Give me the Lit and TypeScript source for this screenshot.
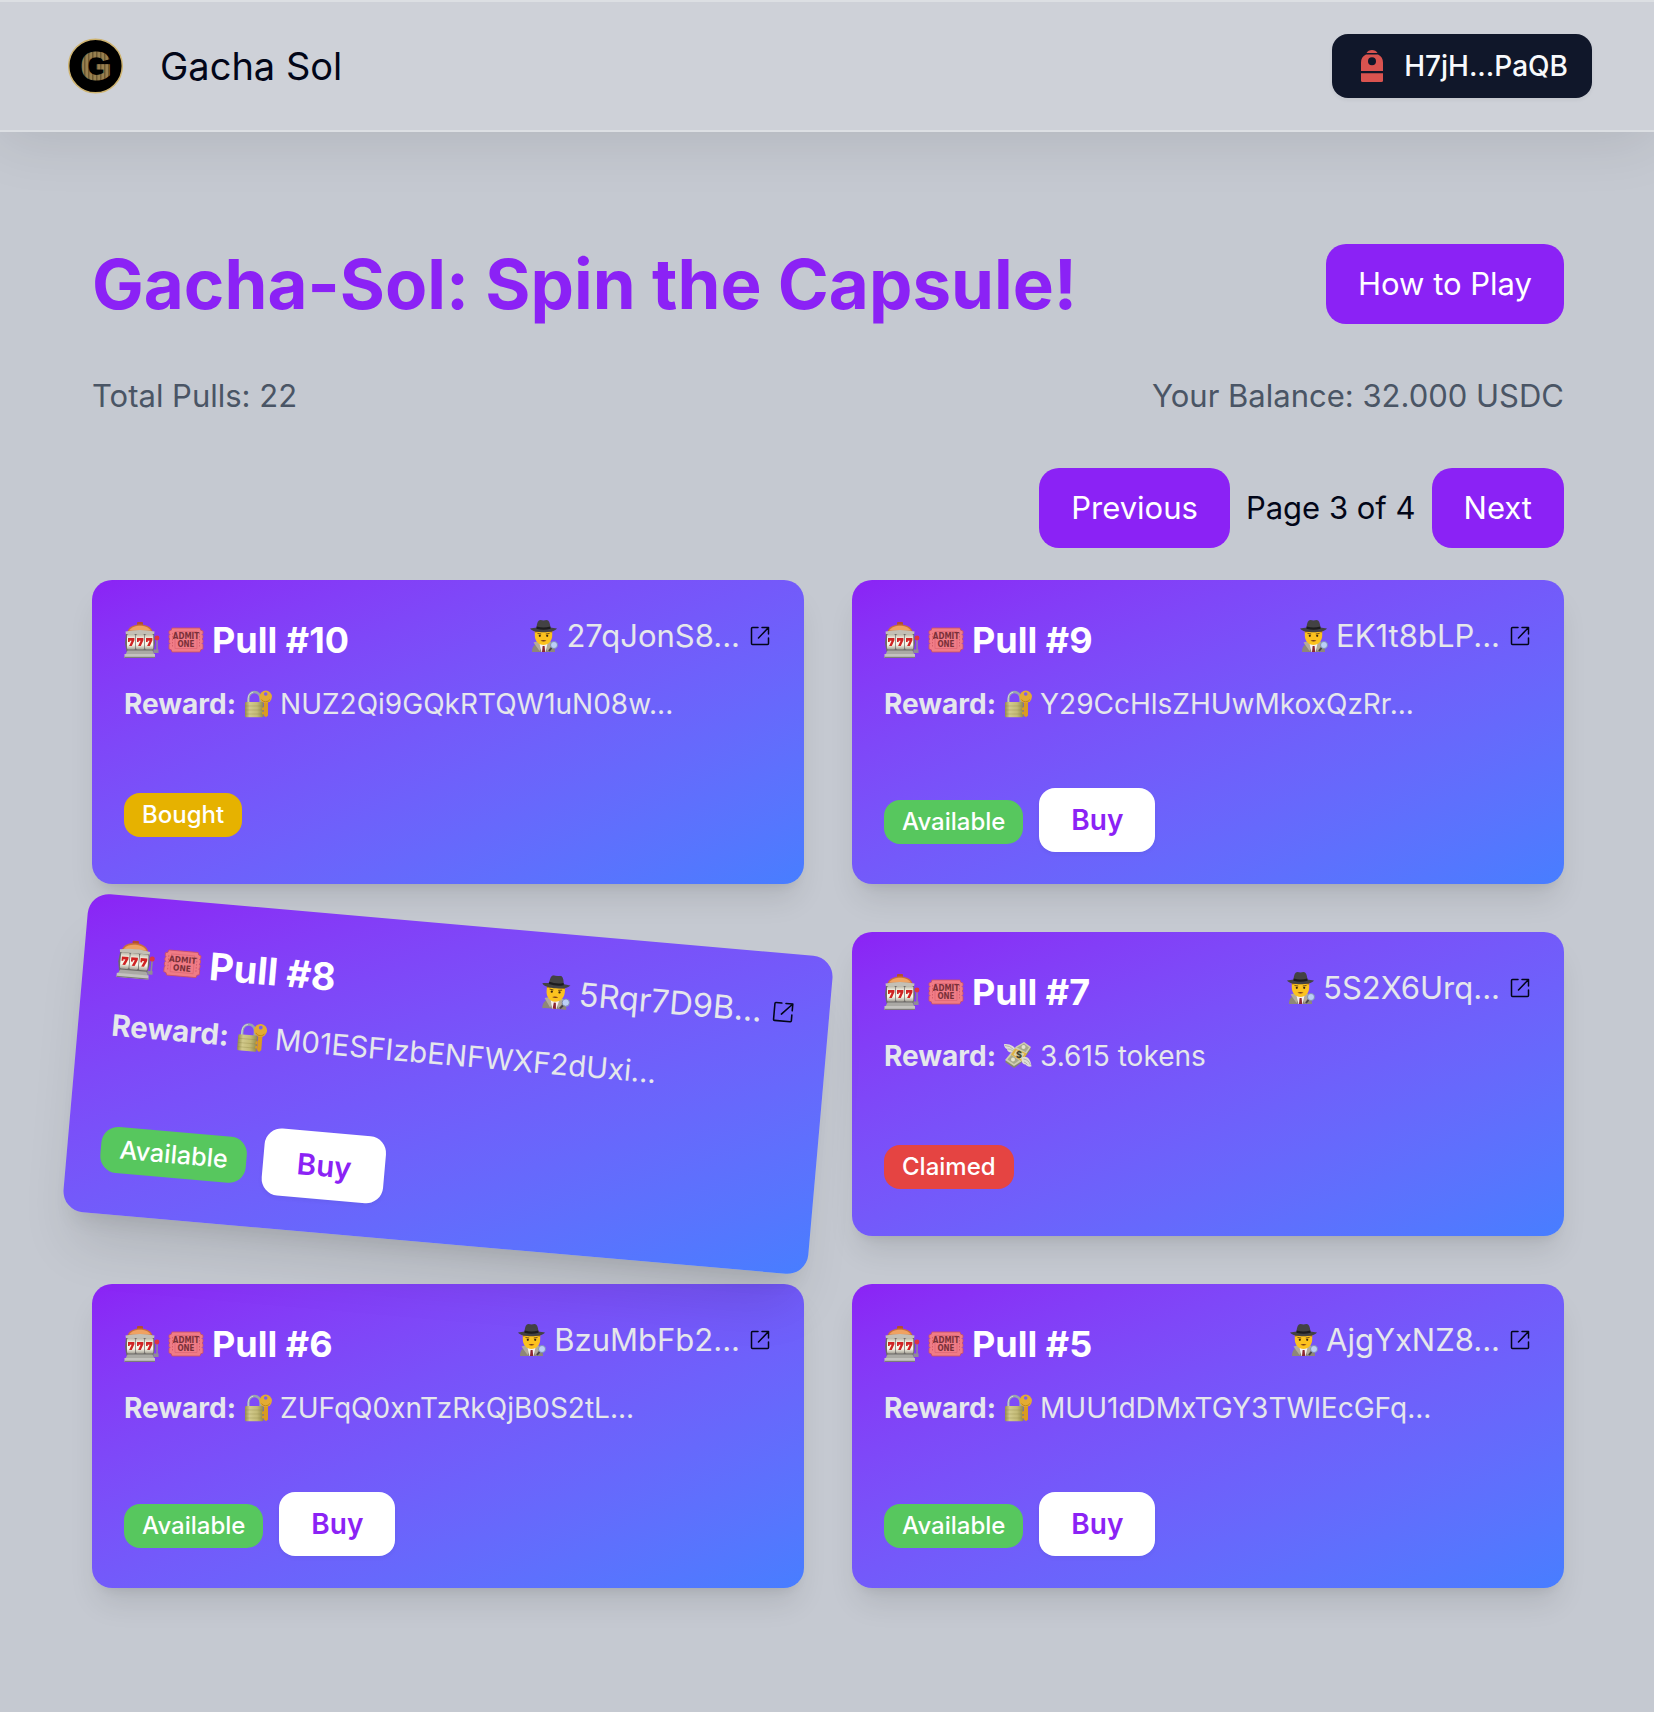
import { LitElement, html, css, svg, nothing } from "lit";
import { customElement, property } from "lit/decorators.js";
import { classMap } from "lit/directives/class-map.js";

type Status = "Available" | "Bought" | "Claimed";

interface Pull {
  id: number;
  owner: string;
  reward: string;
  status: Status;
  active?: boolean;
}

const PULLS: Pull[] = [
  { id: 10, owner: "27qJonS8...", reward: "NUZ2Qi9GQkRTQW1uN08w...", status: "Bought" },
  { id: 9, owner: "EK1t8bLP...", reward: "Y29CcHlsZHUwMkoxQzRr...", status: "Available" },
  { id: 8, owner: "5Rqr7D9B...", reward: "M01ESFIzbENFWXF2dUxi...", status: "Available", active: true },
  { id: 7, owner: "5S2X6Urq...", reward: "3.615 tokens", status: "Claimed" },
  { id: 6, owner: "BzuMbFb2...", reward: "ZUFqQ0xnTzRkQjB0S2tL...", status: "Available" },
  { id: 5, owner: "AjgYxNZ8...", reward: "MUU1dDMxTGY3TWlEcGFq...", status: "Available" },
];

const seven = (x: number) => svg`<path d="M${x} 16h6.400v2.200l-2.600 5.800h-2.700l2.500-5.300h-1.900v1.400h-1.700z" fill="#cf2323"/>`;

const slotIcon = html`<svg class="slot" viewBox="0 0 36 36" aria-hidden="true">
  <defs>
    <linearGradient id="reel" x2="0" y2="1">
      <stop offset="0" stop-color="#b9b5a6" /><stop offset=".3" stop-color="#f8f5e8" />
      <stop offset=".7" stop-color="#f8f5e8" /><stop offset="1" stop-color="#a5a296" />
    </linearGradient>
  </defs>
  <rect x="13" y="0" width="6" height="3.500" rx="1" fill="#b4502e" />
  <path d="M3.500 9.500C5 4.500 10 2.500 16 2.500S27 4.500 28.500 9.500z" fill="#c9703a" />
  <path d="M5 8.500C8 4.800 12 3.800 16 3.800s8 1 11 4.700z" fill="#efa262" />
  <path d="M1.500 9.500Q16 6.500 30.500 9.500L30 13H2z" fill="#c3c0b6" />
  <path d="M2 12h28l1 9-1.500 8.500h-27L1 21z" fill="#6d6a68" />
  <rect x="3" y="12" width="8.300" height="15.500" rx="1.500" fill="url(#reel)" />
  <rect x="12" y="12" width="8.300" height="15.500" rx="1.500" fill="url(#reel)" />
  <rect x="21" y="12" width="8.300" height="15.500" rx="1.500" fill="url(#reel)" />
  ${seven(4)}${seven(13)}${seven(22)}
  <path d="M3.500 28.500h25l2 4h-29z" fill="#aaa9a4" />
  <path d="M.500 32h30.500v4H.500z" fill="#c4c3bf" />
  <path d="M.500 34.800h30.500V36H.500z" fill="#7c7b79" />
  <path d="M29.500 27.500h5V31h-5zM32.300 17h1.500v12h-1.500z" fill="#8f8d93" />
  <circle cx="33" cy="16" r="2.400" fill="#dc3545" />
</svg>`;

const ticketIcon = html`<svg class="ticket" viewBox="0 0 36 26" aria-hidden="true">
  <path d="M4 1h28q0 3 3 3v2.500l-1 1 1 1V11l-1 1 1 1v2.500l-1 1 1 1V22q-3 0-3 3H4q0-3-3-3v-4.500l1-1-1-1V13l1-1-1-1V8.500l1-1-1-1V4q3 0 3-3z" fill="#f07c86" stroke="#cc5261" stroke-width=".8" />
  <path d="M7 4.500h22v17H7z" fill="none" stroke="#dd6672" stroke-width=".7" />
  <path d="M4.500 6v14M31.500 6v14" stroke="#cf5765" stroke-width=".8" stroke-dasharray="1.500 1.500" />
  <text x="18" y="12" text-anchor="middle" font-size="8" font-weight="700" fill="#7a3039" font-family="'DejaVu Sans Condensed', Roboto, sans-serif" font-variant-ligatures="none">ADMIT</text>
  <text x="18" y="20" text-anchor="middle" font-size="8" font-weight="700" fill="#7a3039" font-family="'DejaVu Sans Condensed', Roboto, sans-serif">ONE</text>
</svg>`;

const detectiveIcon = html`<svg class="detective" viewBox="0 0 28 32" aria-hidden="true">
  <path d="M2 32c0-4 1.500-7.500 6-9h11c4.500 1.500 6 5 6 9z" fill="#8e8778" />
  <path d="M3.500 22.500l5-1.500 3.500 6-2.500 4zM23.500 22.500l-5-1.500-3.500 6 2.500 4z" fill="#b3ab9b" />
  <path d="M9.500 23.500h8L15.500 32h-4z" fill="#f5f3f2" />
  <path d="M12.600 26h2l.600 6h-3.200z" fill="#8c2733" />
  <path d="M4.800 10h17.400v5.500c0 5.500-4 9.500-8.700 9.500s-8.700-4-8.700-9.500z" fill="#fcc21f" />
  <path d="M4.800 10h17.400v2.500q-8.700-1.500-17.400 0z" fill="#a96e12" />
  <path d="M7.500 13.500l3.700.500M19.500 13.500l-3.700.500" stroke="#69440f" stroke-width=".9" />
  <circle cx="9.800" cy="15.800" r="1.100" fill="#3b2410" /><circle cx="17.200" cy="15.800" r="1.100" fill="#3b2410" />
  <path d="M10.500 20.800q3-1.600 6 0-3 1.300-6 0z" fill="#7a3b18" />
  <path d="M0 8.500C2 8 5 8 6.500 7.500 7 3 8 0 10.500 0q3 .800 6 0C19 0 20 3 20.500 7.500c1.500.500 4.500.500 6.500 1-2 3-8 3.700-13.500 3.700S2 11.500 0 8.500z" fill="#434244" />
  <path d="M6.700 6.500q6.800 2 13.600 0l.300 2.200q-7 2-14.200 0z" fill="#1d1c1e" />
  <circle cx="24" cy="25" r="3.500" fill="#bccff6" stroke="#7d8db3" stroke-width=".9" />
  <path d="M21.500 28l-2.500 3" stroke="#474247" stroke-width="1.800" />
</svg>`;

const lockIcon = html`<svg class="lock" viewBox="0 0 28 28" aria-hidden="true">
  <defs>
    <linearGradient id="brass">
      <stop offset="0" stop-color="#968d4d" /><stop offset=".25" stop-color="#d2ca8c" />
      <stop offset=".65" stop-color="#c3ba76" /><stop offset="1" stop-color="#928a4a" />
    </linearGradient>
  </defs>
  <path d="M4.500 14V8.500a6 6.500 0 0 1 12 0V14" fill="none" stroke="#9aa5ad" stroke-width="2.400" />
  <path d="M4.200 14V8.500a6.300 6.500 0 0 1 5-6.300" fill="none" stroke="#dce2e7" stroke-width=".8" />
  <rect x="1" y="12" width="18.500" height="15.300" rx="1.200" fill="url(#brass)" />
  <path d="M1 16h18.500M1 20h18.500M1 24h18.500" stroke="#8d8445" stroke-width=".5" opacity=".6" />
  <path d="M20 11h4v14.500l-2 1.800-2-1.600z" fill="#d99b22" />
  <path d="M20 17l-2 1v2l2 .3zM20 21.500l-2 .7v2l2 .3z" fill="#d99b22" />
  <circle cx="21.700" cy="6.800" r="6.200" fill="#e3ab33" />
  <path d="M17.500 9.500a5 5 0 0 0 8.400 0" fill="none" stroke="#b87d16" stroke-width=".8" />
  <circle cx="21.700" cy="4" r="1.800" fill="#7c5cf0" />
</svg>`;

const moneyIcon = html`<svg class="lock" viewBox="0 0 28 28" aria-hidden="true">
  <path d="M12 8C10 3 5 2 0 2c0 3 1.500 4.500 3 5 0 2 2 3.500 4 3.500z" fill="#dedcd6" />
  <path d="M1 3.500q5 0 9 4.500M3.500 7q3-.500 5.500 2" stroke="#a9a7a2" stroke-width=".8" fill="none" />
  <path d="M12 6.500L20 1.500l7 5.500-10 14-7 5-9-6z" fill="#85886f" />
  <path d="M12 4.500L20 0l7 5-10 14.500-7 4.500-9-6z" fill="#cfcdb2" />
  <path d="M13 5.500l7-4 5 4-3.500 4.500zM3.500 17.500l4-4.500 7.500 5.500-5 3.500z" fill="#a8aa8d" />
  <circle cx="19.500" cy="5" r="2" fill="#e5e3cf" /><circle cx="9" cy="17.500" r="2" fill="#e5e3cf" />
  <path d="M11 6.500l12 5-5 8-11-7z" fill="#dfb144" />
  <path d="M12.300 8.200l8.200 3.500-3.500 5.500-7.500-4.500z" fill="#d9d3ae" />
  <text x="15" y="15.500" text-anchor="middle" font-size="9" font-weight="800" fill="#41402f" font-family="Inter, sans-serif">$</text>
  <path d="M17.500 15.500c5-2 9 .500 10 9-3 .500-5-.500-6-2-2 0-3.500-1.500-4-4z" fill="#dedcd6" />
  <path d="M19.500 17q5 .500 7 6M20 20q2 .500 3.500 2.500" stroke="#a9a7a2" stroke-width=".8" fill="none" />
</svg>`;

const linkIcon = html`<svg class="link-icon" viewBox="0 0 24 24" aria-hidden="true">
  <path d="M10 3.500H4.500a1 1 0 0 0-1 1v15a1 1 0 0 0 1 1h15a1 1 0 0 0 1-1V14M14 3.500h6.500V10M20.500 3.500l-10 10.500" fill="none" stroke="currentColor" stroke-width="1.500" stroke-linejoin="round" stroke-linecap="round" />
</svg>`;

@customElement("pull-card")
export class PullCard extends LitElement {
  @property({ attribute: false }) pull!: Pull;

  static styles = css`
    :host { display: block; }
    svg { display: block; flex: none; }
    .card {
      box-sizing: border-box;
      height: 100%;
      min-height: 304px;
      padding: 32px;
      border-radius: 20px;
      background: linear-gradient(to bottom right in oklab, #8b22f5, #477eff);
      box-shadow: 0 20px 30px -6px rgb(0 0 0 / 0.1), 0 8px 12px -8px rgb(0 0 0 / 0.1);
      color: #e5e7eb;
    }
    .active {
      transform: scale(1.05) rotate(5deg);
      box-shadow: 0 40px 50px -10px rgb(0 0 0 / 0.1), 0 16px 20px -12px rgb(0 0 0 / 0.1);
    }
    .top { display: flex; justify-content: space-between; align-items: flex-start; }
    .title {
      display: flex;
      align-items: center;
      gap: 8px;
      margin: 0;
      font-size: 36px;
      line-height: 56px;
      font-weight: 700;
      color: #fff;
    }
    .slot { width: 36px; height: 36px; }
    .ticket { width: 36px; height: 26px; }
    .owner {
      display: flex;
      align-items: center;
      gap: 8px;
      font-size: 31px;
      line-height: 48px;
      color: inherit;
      text-decoration: none;
    }
    .detective { width: 28px; height: 32px; }
    .link-icon { width: 24px; height: 24px; color: #020618; }
    .reward {
      display: flex;
      align-items: center;
      gap: 8px;
      margin: 16px 0 64px;
      font-size: 28px;
      line-height: 40px;
    }
    .lock { width: 28px; height: 28px; }
    .actions { display: flex; align-items: center; gap: 16px; min-height: 54px; }
    .actions.buyable { align-items: baseline; }
    .badge {
      padding: 6px 18px;
      border-radius: 16px;
      font-size: 24px;
      line-height: 32px;
      font-weight: 500;
      color: #fff;
    }
    .available { background: #57c75e; }
    .bought { background: #e6b200; }
    .claimed { background: #e54442; }
    .buy {
      padding: 12px 32px;
      border: 0;
      border-radius: 16px;
      background: #fff;
      color: #8b22f5;
      font: inherit;
      font-size: 28px;
      line-height: 40px;
      font-weight: 600;
      box-shadow: 0 2px 4px rgb(0 0 0 / 0.05);
      cursor: pointer;
    }
  `;

  render() {
    const { id, owner, reward, status, active } = this.pull;
    const canBuy = status === "Available";
    return html`<article class=${classMap({ card: true, active: !!active })}>
      <div class="top">
        <h2 class="title">${slotIcon}${ticketIcon}<span>Pull #${id}</span></h2>
        <a class="owner" href="#pull-${id}">${detectiveIcon}<span>${owner}</span>${linkIcon}</a>
      </div>
      <p class="reward"><strong>Reward:</strong>${status === "Claimed" ? moneyIcon : lockIcon}<span>${reward}</span></p>
      <div class=${classMap({ actions: true, buyable: canBuy })}>
        <span class="badge ${status.toLowerCase()}">${status}</span>
        ${canBuy ? html`<button class="buy" type="button">Buy</button>` : nothing}
      </div>
    </article>`;
  }
}

@customElement("app-root")
export class AppRoot extends LitElement {
  static styles = css`
    :host {
      display: block;
      min-height: 100vh;
      background: #c5c9d1;
      color: #020618;
      font-family: Inter, "Liberation Sans", sans-serif;
    }
    svg { display: block; flex: none; }
    .header {
      display: flex;
      justify-content: space-between;
      align-items: center;
      padding: 32px 62px 32px 68px;
      border-top: 2px solid #dcdfe3;
      border-bottom: 2px solid #dcdfe3;
      background: #ced1d8;
      box-shadow: 0 8px 60px rgb(0 0 0 / 0.1);
    }
    .brand {
      display: flex;
      align-items: center;
      gap: 36px;
      color: inherit;
      font-size: 38px;
      line-height: 56px;
      text-decoration: none;
    }
    .logo { width: 56px; height: 56px; }
    .wallet {
      display: flex;
      align-items: center;
      gap: 20px;
      padding: 12px 24px 12px 28px;
      border: 0;
      border-radius: 16px;
      background: #10172a;
      color: #f8fafc;
      font: inherit;
      font-size: 28px;
      line-height: 40px;
      font-weight: 500;
      box-shadow: 0 2px 4px rgb(0 0 0 / 0.05);
      cursor: pointer;
    }
    .wallet-icon { width: 24px; height: 32px; }
    .main { padding: 112px 90px 124px 92px; }
    .hero, .stats { display: flex; justify-content: space-between; align-items: center; }
    .heading { margin: 0; font-size: 69px; line-height: 80px; font-weight: 700; color: #8b22f5; }
    .stats { margin: 48px 0; font-size: 31px; line-height: 48px; color: #4a5565; }
    .pager {
      display: flex;
      justify-content: flex-end;
      align-items: center;
      gap: 16px;
      margin-bottom: 32px;
      font-size: 31px;
      line-height: 48px;
    }
    .button {
      padding: 16px 32px;
      border: 0;
      border-radius: 20px;
      background: #8b22f5;
      color: #fff;
      font: inherit;
      font-size: 31px;
      line-height: 48px;
      cursor: pointer;
    }
    .grid { display: grid; grid-template-columns: 1fr 1fr; gap: 48px; }
  `;

  render() {
    return html`
      <header class="header">
        <a class="brand" href="#home">
          <svg class="logo" viewBox="0 0 56 56" aria-hidden="true">
            <defs>
              <pattern id="bars" width="4" height="8" patternUnits="userSpaceOnUse">
                <rect width="4" height="8" fill="#98804f" />
                <rect x="0" width="1.500" height="8" fill="#6d5932" />
              </pattern>
            </defs>
            <circle cx="27.500" cy="28" r="26.800" fill="#000" stroke="#cfb470" stroke-width="1.500" />
            <text x="28" y="42" text-anchor="middle" font-family="'Liberation Sans', sans-serif" font-size="40" font-weight="700" fill="url(#bars)" stroke="url(#bars)" stroke-width="1">G</text>
          </svg>
          <span>Gacha Sol</span>
        </a>
        <button class="wallet" type="button">
          <svg class="wallet-icon" viewBox="0 0 24 32" fill="#d9534f" aria-hidden="true">
            <path d="M6.500 3C7.500 1 9.500 0 12 0s4.500 1 5.500 3z" />
            <path fill-rule="evenodd" d="M6 4.500h12c3.500 1.500 5 4.500 5 8V21H1v-8.500c0-3.500 1.500-6.500 5-8zM12 7.200a4 4 0 1 0 0 8 4 4 0 0 0 0-8z" />
            <path d="M1 23.200h22V30.500a1.500 1.500 0 0 1-1.500 1.500h-19A1.500 1.500 0 0 1 1 30.500z" />
          </svg>
          <span>H7jH...PaQB</span>
        </button>
      </header>
      <main class="main">
        <div class="hero">
          <h1 class="heading">Gacha-Sol: Spin the Capsule!</h1>
          <button class="button" type="button">How to Play</button>
        </div>
        <div class="stats"><span>Total Pulls: 22</span><span>Your Balance: 32.000 USDC</span></div>
        <nav class="pager" aria-label="Pages">
          <button class="button" type="button">Previous</button>
          <span>Page 3 of 4</span>
          <button class="button" type="button">Next</button>
        </nav>
        <section class="grid">${PULLS.map((pull) => html`<pull-card .pull=${pull}></pull-card>`)}</section>
      </main>
    `;
  }
}
